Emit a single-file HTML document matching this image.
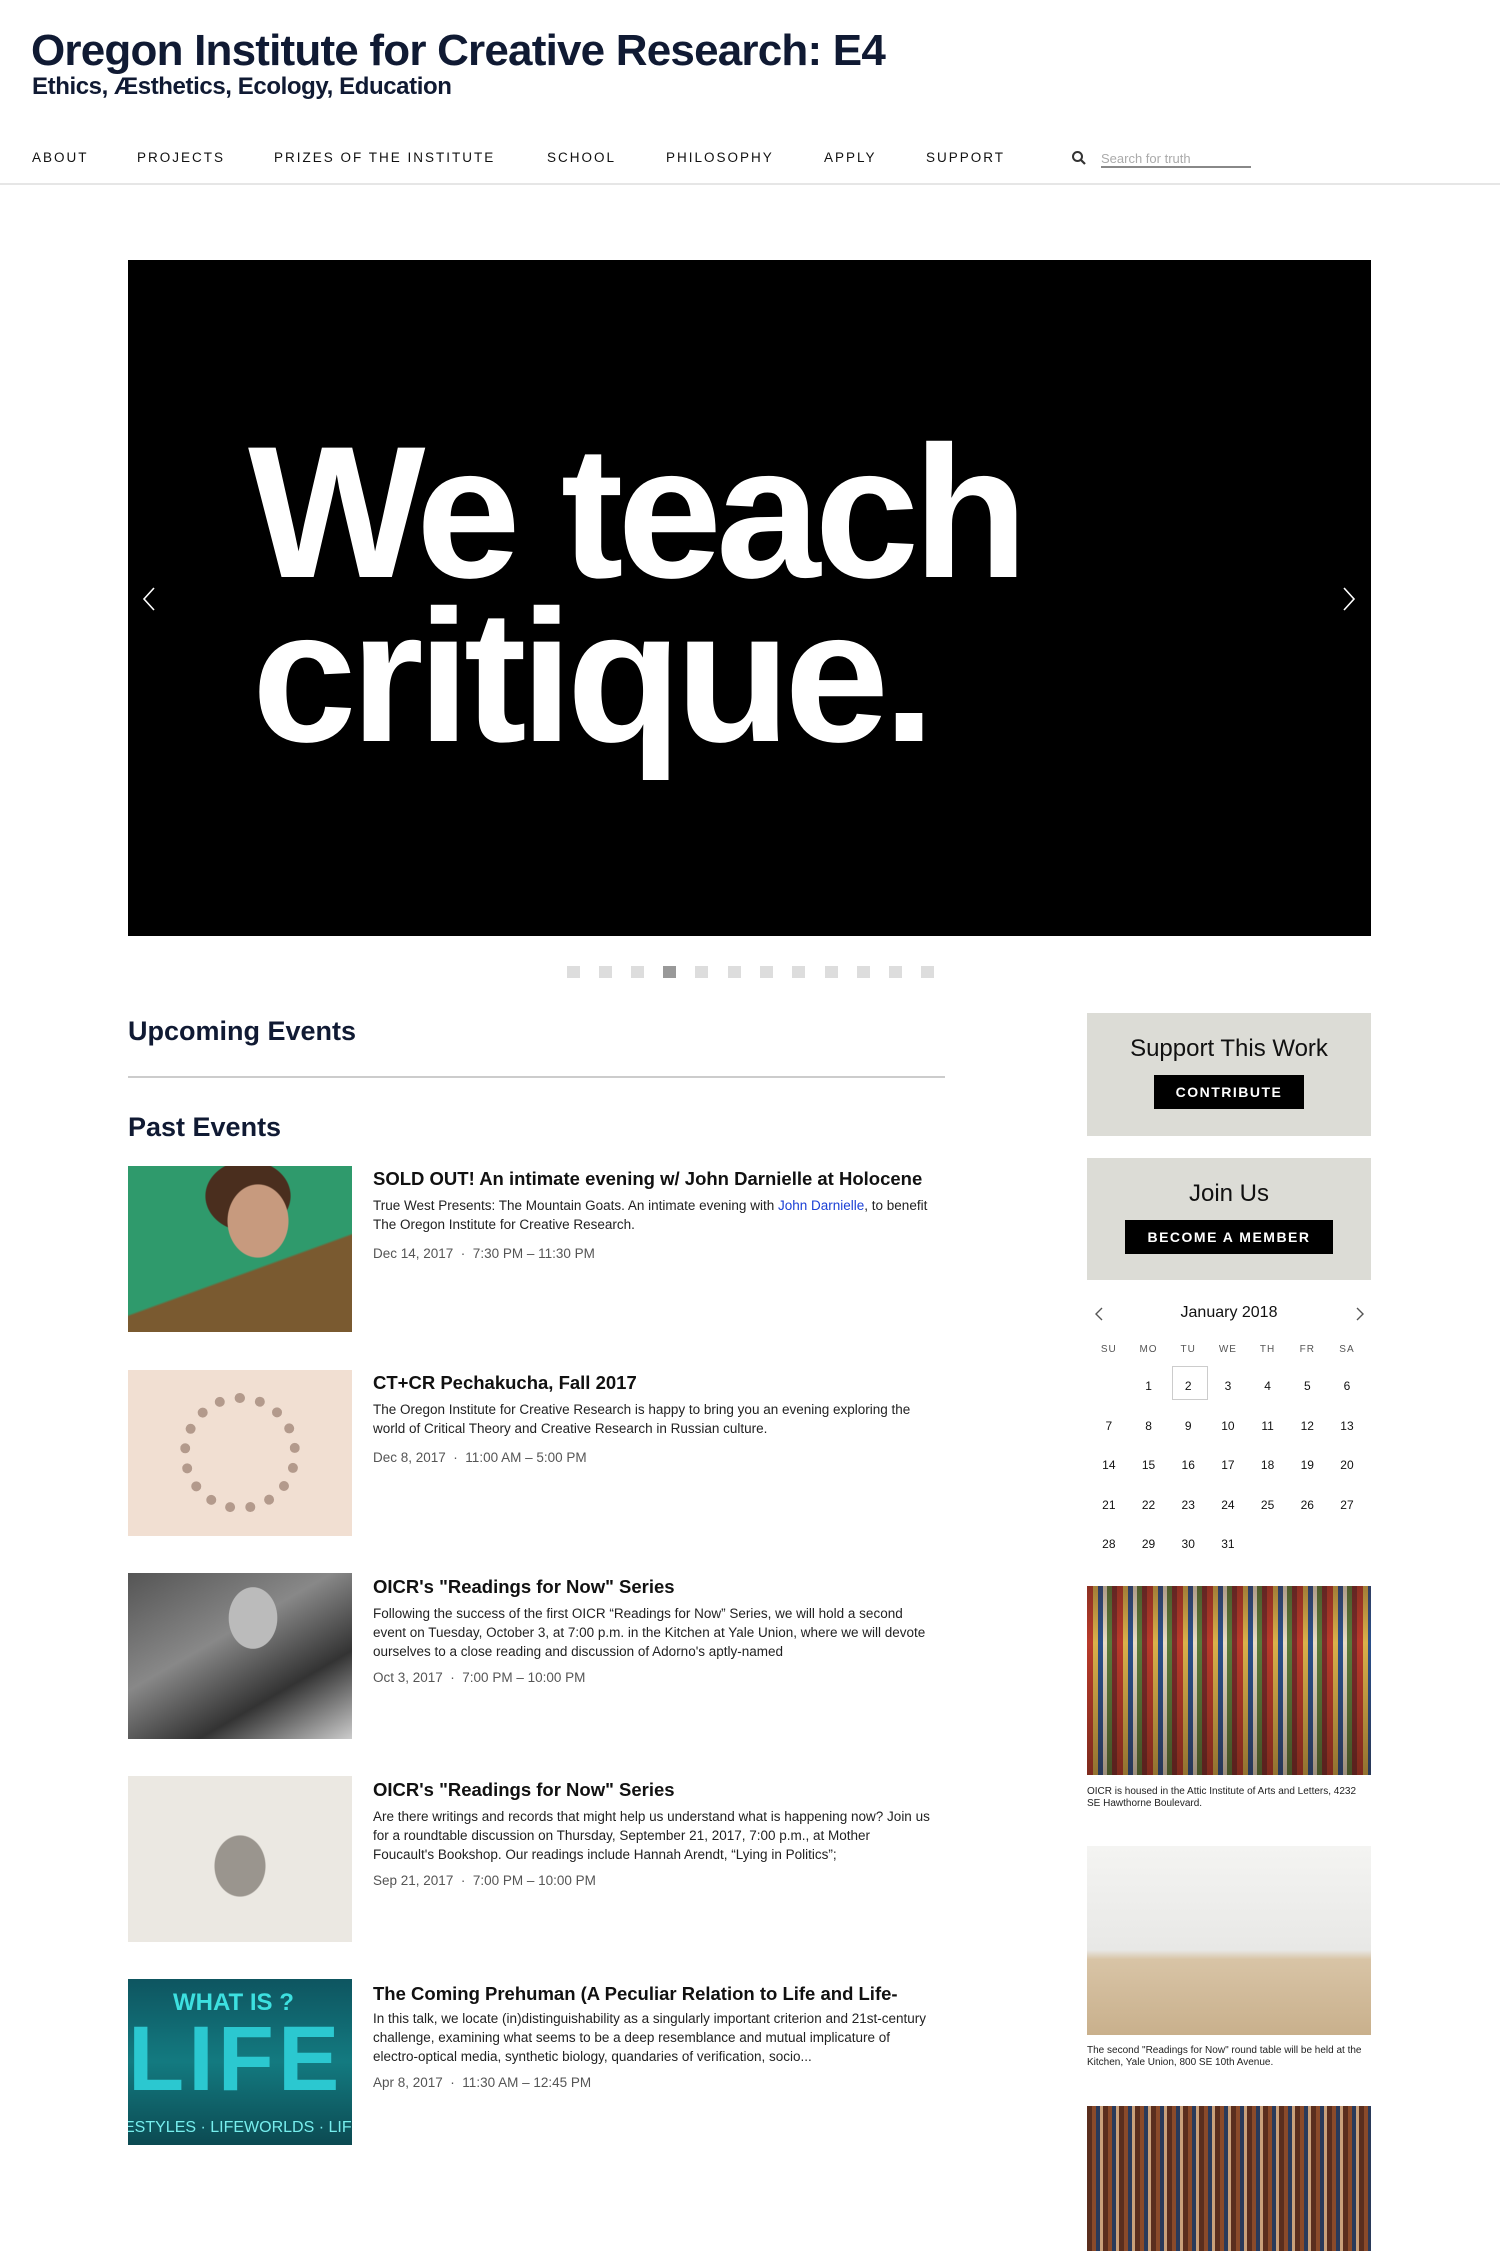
<!DOCTYPE html>
<html><head><meta charset="utf-8">
<style>
*{margin:0;padding:0;box-sizing:border-box}
body{width:1500px;height:2251px;position:relative;background:#fff;font-family:"Liberation Sans",Arial,sans-serif;overflow:hidden;color:#111}
.a{position:absolute}
h1{position:absolute;left:31px;top:26px;font-size:44px;font-weight:bold;color:#101a33;letter-spacing:-0.8px;white-space:nowrap}
.sub{left:32px;top:73px;font-size:24px;font-weight:bold;color:#101a33;letter-spacing:-0.4px;white-space:nowrap}
.nav{top:150px;font-size:13.5px;letter-spacing:2px;color:#111;white-space:nowrap}
.hero{left:128px;top:260px;width:1243px;height:676px;background:#000;color:#fff}
.hero .t{position:absolute;left:120px;font-size:188px;font-weight:bold;letter-spacing:-6px;line-height:1;white-space:nowrap}
.dot{top:966px;width:13px;height:12px;background:#ddd}
.sec{left:128px;font-size:27px;font-weight:bold;color:#101a33}
.img{left:128px;width:224px;height:166px}
.et{left:373px;font-size:18.5px;font-weight:bold;color:#111;white-space:nowrap}
.ed{left:373px;width:560px;font-size:13.5px;line-height:19px;color:#222}
.dt{left:373px;font-size:13.5px;color:#555;white-space:nowrap}
.box{left:1087px;width:284px;background:#dcdcd6;text-align:center}
.btn{display:inline-block;background:#000;color:#fff;font-size:14px;font-weight:bold;letter-spacing:1.5px;padding:0 22px;height:34px;line-height:34px}
.cap{left:1087px;width:284px;font-size:10px;line-height:12px;color:#222}
</style></head><body>
<h1>Oregon Institute for Creative Research: E4</h1>
<div class="a sub">Ethics, Æsthetics, Ecology, Education</div>
<div class="a nav" style="left:32px">ABOUT</div>
<div class="a nav" style="left:137px">PROJECTS</div>
<div class="a nav" style="left:274px">PRIZES OF THE INSTITUTE</div>
<div class="a nav" style="left:547px">SCHOOL</div>
<div class="a nav" style="left:666px">PHILOSOPHY</div>
<div class="a nav" style="left:824px">APPLY</div>
<div class="a nav" style="left:926px">SUPPORT</div>
<svg class="a" style="left:1071px;top:150px" width="16" height="16" viewBox="0 0 16 16"><circle cx="6.5" cy="6.5" r="4.5" fill="none" stroke="#333" stroke-width="2"/><path d="M10 10l4 4" stroke="#333" stroke-width="2.2"/></svg>
<div class="a" style="left:1101px;top:151px;font-size:13px;color:#aaa">Search for truth</div>
<div class="a" style="left:1101px;top:166px;width:150px;height:2px;background:#888"></div>
<div class="a" style="left:0;top:183px;width:1500px;height:2px;background:#e6e6e6"></div>

<div class="a hero">
<div class="t" style="top:158px">We teach</div>
<div class="t" style="top:322px;left:124px">critique.</div>
<svg class="a" style="left:14px;top:326px" width="14" height="26"><path d="M12 2L2 13l10 11" fill="none" stroke="#fff" stroke-width="1.6"/></svg>
<svg class="a" style="left:1214px;top:326px" width="14" height="26"><path d="M2 2l10 11L2 24" fill="none" stroke="#fff" stroke-width="1.6"/></svg>
</div>
<div class="a dot" style="left:567px"></div><div class="a dot" style="left:599px"></div><div class="a dot" style="left:631px"></div><div class="a dot" style="left:663px;background:#999"></div><div class="a dot" style="left:695px"></div><div class="a dot" style="left:728px"></div><div class="a dot" style="left:760px"></div><div class="a dot" style="left:792px"></div><div class="a dot" style="left:825px"></div><div class="a dot" style="left:857px"></div><div class="a dot" style="left:889px"></div><div class="a dot" style="left:921px"></div>

<div class="a sec" style="top:1016px">Upcoming Events</div>
<div class="a" style="left:128px;top:1076px;width:817px;height:2px;background:#ccc"></div>
<div class="a sec" style="top:1112px">Past Events</div>

<div class="a img" style="top:1166px;background:radial-gradient(ellipse 50px 60px at 130px 55px,#c79a7e 60%,transparent 62%),radial-gradient(ellipse 60px 50px at 120px 30px,#4a2e1e 70%,transparent 72%),linear-gradient(160deg,transparent 60%,#7a5a30 61%),#2f9a6c"></div>
<div class="a et" style="top:1168px">SOLD OUT! An intimate evening w/ John Darnielle at Holocene</div>
<div class="a ed" style="top:1196px">True West Presents: The Mountain Goats. An intimate evening with <span style="color:#1a3fd6">John Darnielle</span>, to benefit The Oregon Institute for Creative Research.</div>
<div class="a dt" style="top:1246px">Dec 14, 2017 &nbsp;·&nbsp; 7:30 PM – 11:30 PM</div>

<div class="a img" style="top:1370px;background:#f1dfd2"><div class="a" style="left:52px;top:23px;width:120px;height:120px;border-radius:50%;border:10px dotted #b39a8c"></div></div>
<div class="a et" style="top:1372px">CT+CR Pechakucha, Fall 2017</div>
<div class="a ed" style="top:1400px">The Oregon Institute for Creative Research is happy to bring you an evening exploring the world of Critical Theory and Creative Research in Russian culture.</div>
<div class="a dt" style="top:1450px">Dec 8, 2017 &nbsp;·&nbsp; 11:00 AM – 5:00 PM</div>

<div class="a img" style="top:1573px;background:radial-gradient(ellipse 30px 38px at 125px 45px,#bbb 80%,transparent 82%),linear-gradient(150deg,#555 0,#888 40%,#333 70%,#ccc 100%)"></div>
<div class="a et" style="top:1576px">OICR's "Readings for Now" Series</div>
<div class="a ed" style="top:1604px">Following the success of the first OICR “Readings for Now” Series, we will hold a second event on Tuesday, October 3, at 7:00 p.m. in the Kitchen at Yale Union, where we will devote ourselves to a close reading and discussion of Adorno's aptly-named</div>
<div class="a dt" style="top:1670px">Oct 3, 2017 &nbsp;·&nbsp; 7:00 PM – 10:00 PM</div>

<div class="a img" style="top:1776px;background:radial-gradient(ellipse 50px 60px at 112px 90px,#9a958e 50%,transparent 52%),#ebe8e2"></div>
<div class="a et" style="top:1779px">OICR's "Readings for Now" Series</div>
<div class="a ed" style="top:1807px">Are there writings and records that might help us understand what is happening now? Join us for a roundtable discussion on Thursday, September 21, 2017, 7:00 p.m., at Mother Foucault's Bookshop. Our readings include Hannah Arendt, “Lying in Politics”;</div>
<div class="a dt" style="top:1873px">Sep 21, 2017 &nbsp;·&nbsp; 7:00 PM – 10:00 PM</div>

<div class="a img" style="top:1979px;background:linear-gradient(180deg,#0e5560,#137a80 50%,#0c4a52);color:#3de0e0;overflow:hidden">
<div class="a" style="left:45px;top:10px;font-size:24px;font-weight:bold">WHAT IS ?</div>
<div class="a" style="left:0;top:28px;font-size:92px;font-weight:bold;letter-spacing:4px;color:#2bc8d0">LIFE</div>
<div class="a" style="left:-4px;top:140px;font-size:16px;color:#7ee;white-space:nowrap">ESTYLES · LIFEWORLDS · LIFEWO</div></div>
<div class="a et" style="top:1983px">The Coming Prehuman (A Peculiar Relation to Life and Life-</div>
<div class="a ed" style="top:2009px">In this talk, we locate (in)distinguishability as a singularly important criterion and 21st-century challenge, examining what seems to be a deep resemblance and mutual implicature of electro-optical media, synthetic biology, quandaries of verification, socio...</div>
<div class="a dt" style="top:2075px">Apr 8, 2017 &nbsp;·&nbsp; 11:30 AM – 12:45 PM</div>

<div class="a box" style="top:1013px;height:123px"><div style="font-size:24px;margin-top:22px;color:#111">Support This Work</div><div class="btn" style="margin-top:12px">CONTRIBUTE</div></div>
<div class="a box" style="top:1158px;height:122px"><div style="font-size:24px;margin-top:22px;color:#111">Join Us</div><div class="btn" style="margin-top:12px">BECOME A MEMBER</div></div>

<svg class="a" style="left:1094px;top:1306px" width="10" height="16"><path d="M8 2L2 8l6 6" fill="none" stroke="#555" stroke-width="1.4"/></svg>
<svg class="a" style="left:1355px;top:1306px" width="10" height="16"><path d="M2 2l6 6-6 6" fill="none" stroke="#555" stroke-width="1.4"/></svg>
<div class="a" style="left:1087px;top:1304px;width:284px;text-align:center;font-size:16px;color:#111">January 2018</div>
<div class="a" style="left:1172px;top:1366px;width:36px;height:34px;border:1px solid #ccc"></div>
<div class="a" style="left:1089px;top:1344px;width:280px;display:grid;grid-template-columns:repeat(7,39.7px);font-size:10px;letter-spacing:1px;text-align:center;color:#555">
<div>SU</div><div>MO</div><div>TU</div><div>WE</div><div>TH</div><div>FR</div><div>SA</div>
</div>
<div class="a" style="left:1089px;top:1379px;width:280px;display:grid;grid-template-columns:repeat(7,39.7px);grid-auto-rows:39.5px;font-size:12px;text-align:center;color:#111">
<div></div><div>1</div><div>2</div><div>3</div><div>4</div><div>5</div><div>6</div>
<div>7</div><div>8</div><div>9</div><div>10</div><div>11</div><div>12</div><div>13</div>
<div>14</div><div>15</div><div>16</div><div>17</div><div>18</div><div>19</div><div>20</div>
<div>21</div><div>22</div><div>23</div><div>24</div><div>25</div><div>26</div><div>27</div>
<div>28</div><div>29</div><div>30</div><div>31</div>
</div>

<div class="a" style="left:1087px;top:1586px;width:284px;height:189px;background:linear-gradient(180deg,rgba(60,30,20,.35),rgba(0,0,0,0) 30%,rgba(40,20,10,.4)),repeating-linear-gradient(90deg,#b83a2a 0 6px,#d9b04a 6px 11px,#2a4f8a 11px 16px,#e8dcc4 16px 20px,#5a7a3a 20px 25px,#7a2a2a 25px 30px),#8a6a4a"></div>
<div class="a cap" style="top:1786px">OICR is housed in the Attic Institute of Arts and Letters, 4232 SE Hawthorne Boulevard.</div>
<div class="a" style="left:1087px;top:1846px;width:284px;height:189px;background:linear-gradient(180deg,#f4f4f2 0,#e8e8e6 55%,#d8c4a6 60%,#c9b08c 100%)"></div>
<div class="a cap" style="top:2045px">The second "Readings for Now" round table will be held at the Kitchen, Yale Union, 800 SE 10th Avenue.</div>
<div class="a" style="left:1087px;top:2106px;width:284px;height:145px;background:repeating-linear-gradient(90deg,#5a2e1e 0 5px,#8a4a2a 5px 9px,#2a3a5a 9px 13px,#c9a07a 13px 16px),#6a3a22"></div>
</body></html>
